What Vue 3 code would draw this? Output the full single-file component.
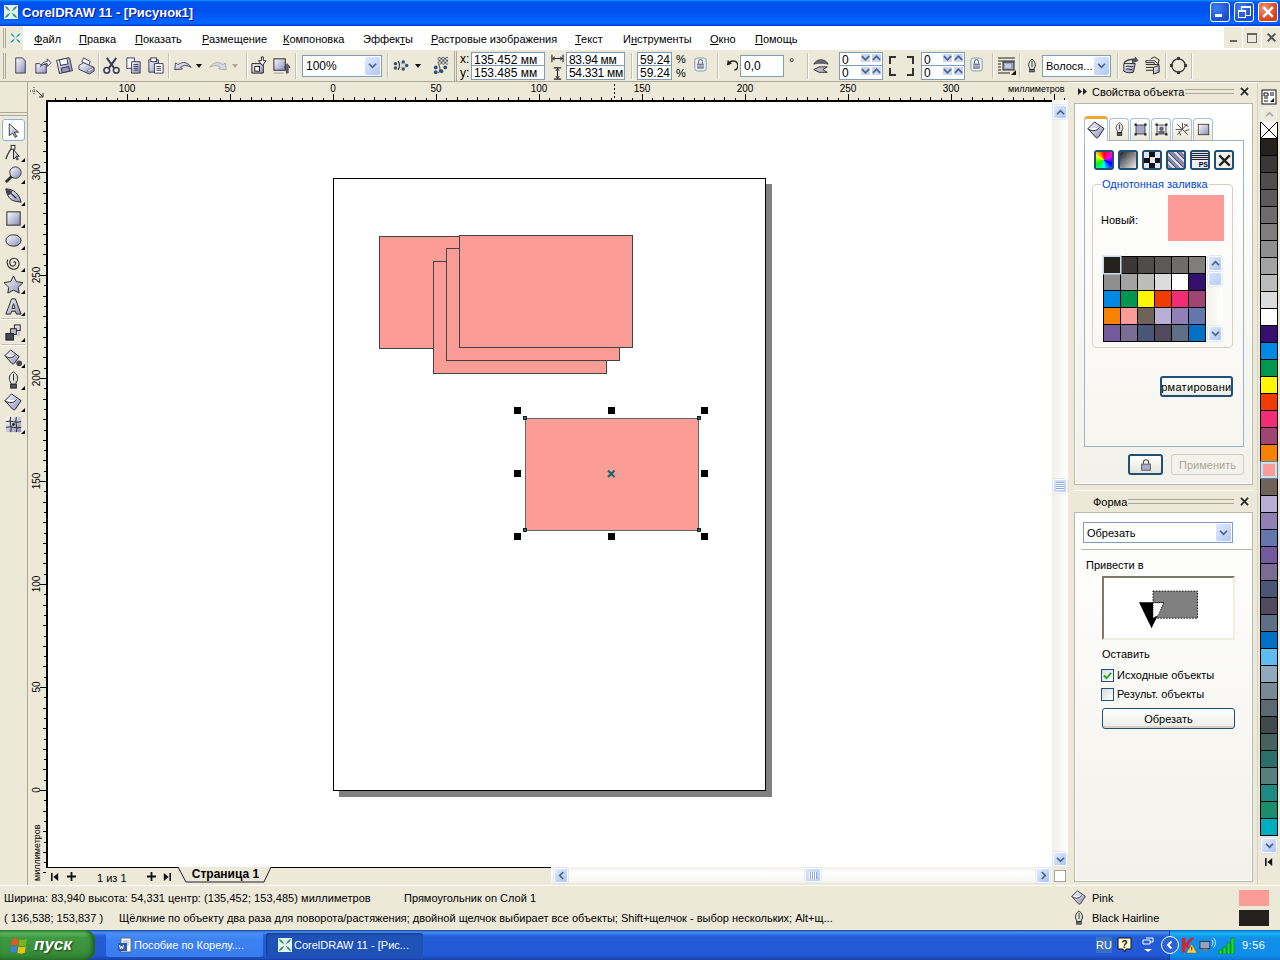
<script setup>
const menus = [
  ['', 'Ф', 'айл'], ['', 'П', 'равка'], ['', 'П', 'оказать'], ['', 'Р', 'азмещение'], ['', 'К', 'омпоновка'],
  ['Эффек', 'т', 'ы'], ['', 'Р', 'астровые изображения'], ['', 'Т', 'екст'], ['И', 'н', 'струменты'], ['', 'О', 'кно'], ['', 'П', 'омощь']
]
const colors = ['#24201c','#3a3735','#4f4c49','#5c5a58','#6e6d6b','#7f7e7d','#8f8f8f','#a3a3a3','#bcbcbb','#dcdcdc','#ffffff','#36106f','#0088e4','#009650','#fff700','#ef3c00','#f12d76','#a04571','#f58200','#fb9c96','#6f6259','#b9aed4','#9080b5','#6376ae','#735a9c','#7a6c93','#4a5676','#514a5f','#5f6f85','#0071c5','#5fbcf2','#90a9bc','#778a96','#5b6970','#42494c','#45625f','#2b6f6b','#55807d','#1e8a83','#1b8d6a','#00aec4']
const gridColors = colors.slice(0, 30)
const PX = 2.06
const hTicks = []
for (let v = -160; v <= 355; v += 5) {
  const x = Math.round(333 + v * PX) + 0.5
  hTicks.push({ x, len: v % 50 === 0 ? 6 : v % 10 === 0 ? 3 : 2 })
}
const hLabels = [-100, -50, 0, 50, 100, 150, 200, 250, 300].map(v => ({ x: 333 + v * PX, t: Math.abs(v) }))
const vTicks = []
for (let v = -40; v <= 325; v += 5) {
  const y = Math.round(790 - v * PX) + 0.5
  vTicks.push({ y, len: v % 50 === 0 ? 6 : v % 10 === 0 ? 3 : 2 })
}
const vLabels = [300, 250, 200, 150, 100, 50, 0].map(v => ({ y: 790 - v * PX, t: v }))
const rects = [
  { x: 379.5, y: 236.5 }, { x: 433.5, y: 261.5 }, { x: 446.5, y: 248.5 }, { x: 459.5, y: 235.5 }
]
const handles = [[514, 407], [608, 407], [701, 407], [514, 470], [701, 470], [514, 533], [608, 533], [701, 533]]
const nodes = [[523, 416], [697, 416], [523, 528], [697, 528]]
const tools1 = ['arrow', 'shape', 'zoom', 'free', 'rect', 'ell', 'spiral', 'star', 'text']
const tools2 = ['bucket', 'pen', 'fill', 'mesh']
const tabs = ['pen', 'xform', 'xform2', 'web', 'rect']
const fills = ['grad', 'pat', 'tex', 'ps']
</script>

<template>
  <div class="app">
    <svg class="sprite" width="0" height="0" aria-hidden="true">
      <defs>
        <linearGradient id="lg" x1="0" y1="0" x2="1" y2="1"><stop offset="0" stop-color="#ffffff"/><stop offset="1" stop-color="#8a8abb"/></linearGradient>
        <linearGradient id="lh" x1="0" y1="0" x2="1" y2="1"><stop offset="0" stop-color="#ffffff"/><stop offset="1" stop-color="#c9c9c0"/></linearGradient>
        <pattern id="chk" width="4" height="4" patternUnits="userSpaceOnUse"><rect width="4" height="4" fill="#dde"/><rect width="2" height="2" fill="#222"/><rect x="2" y="2" width="2" height="2" fill="#222"/></pattern>
      </defs>
      <symbol id="i-new" viewBox="0 0 20 20"><path d="M5 2h7l3 3v13l-2 0H5z" fill="url(#lg)" stroke="#3a3a5a"/></symbol>
      <symbol id="i-open" viewBox="0 0 20 20"><path d="M3 8h4l1 1h6v9H3z" fill="url(#lg)" stroke="#3a3a5a"/><path d="M8 11c1-4 4-5 7-5V3l4 4-4 4V8c-3 0-5 1-7 3z" fill="#fff" stroke="#3a3a5a"/></symbol>
      <symbol id="i-save" viewBox="0 0 20 20"><g transform="rotate(-12 10 10)"><path d="M3 3h13l1 1v13H3z" fill="url(#lg)" stroke="#3a3a5a"/><rect x="6" y="3" width="8" height="6" fill="#fff" stroke="#3a3a5a"/><rect x="6" y="12" width="8" height="5" fill="#99a" stroke="#3a3a5a"/></g></symbol>
      <symbol id="i-print" viewBox="0 0 20 20"><path d="M7 2l7 4-2 4-7-4z" fill="#fff" stroke="#3a3a5a"/><path d="M2 10l5-3 11 5v4l-5 3-11-5z" fill="url(#lg)" stroke="#3a3a5a"/><path d="M11 15l6-3v2l-6 3z" fill="#fff" stroke="#3a3a5a" stroke-width=".6"/></symbol>
      <symbol id="i-cut" viewBox="0 0 20 20"><g fill="none" stroke="#3a3a5a" stroke-width="1.6"><circle cx="5" cy="15" r="3"/><circle cx="15" cy="15" r="3"/><path d="M7 13L15 2M13 13L5 2" stroke-width="2"/></g></symbol>
      <symbol id="i-copy" viewBox="0 0 20 20"><path d="M3 2h8v11H3z" fill="#fff" stroke="#3a3a5a"/><path d="M8 6h9v12H8z" fill="url(#lg)" stroke="#3a3a5a"/><path d="M10 9h5M10 11h5M10 13h5M10 15h5" stroke="#3a3a5a"/></symbol>
      <symbol id="i-paste" viewBox="0 0 20 20"><path d="M3 4h10v13H3z" fill="url(#lg)" stroke="#3a3a5a"/><rect x="5" y="2" width="6" height="4" fill="#fff" stroke="#3a3a5a"/><path d="M9 8h9v10H9z" fill="#fff" stroke="#3a3a5a"/><path d="M11 11h5M11 13h5M11 15h5" stroke="#3a3a5a"/></symbol>
      <symbol id="i-undo" viewBox="0 0 22 20"><path d="M2 15l1-8 3 2c5-4 11-3 15 3-4-2-8-3-12 0l2 2z" fill="url(#lg)" stroke="#3a3a5a"/></symbol>
      <symbol id="i-redo" viewBox="0 0 22 20"><path d="M20 15l-1-8-3 2C11 5 5 6 1 12c4-2 8-3 12 0l-2 2z" fill="#d8d8de" stroke="#a5a5b0"/></symbol>
      <symbol id="i-import" viewBox="0 0 20 20"><path d="M2 8h12v10H2z" fill="url(#lg)" stroke="#222"/><rect x="5" y="11" width="5" height="5" fill="#fff" stroke="#222"/><path d="M14 1v4h3l-4 5-4-5h3V1z" fill="#fff" stroke="#222"/></symbol>
      <symbol id="i-export" viewBox="0 0 20 20"><rect x="2" y="3" width="12" height="12" fill="url(#lg)" stroke="#222"/><path d="M15 18v-6h-2l3-4 3 4h-2v6z" fill="#667" stroke="#222" stroke-width=".6"/><path d="M2 18h10" stroke="#99a"/></symbol>
      <symbol id="i-launch" viewBox="0 0 22 20"><g fill="#2f4f7a"><circle cx="4" cy="8" r="2"/><circle cx="4" cy="13" r="2"/><circle cx="13" cy="6" r="2"/><circle cx="17" cy="10" r="2"/><circle cx="13" cy="14" r="2"/></g><path d="M7 5c2 3 2 7 0 10" fill="none" stroke="#333" stroke-width="1.4"/><path d="M10 8h6M10 12h6" stroke="#8aa"/></symbol>
      <symbol id="i-online" viewBox="0 0 20 20"><g fill="#2f4f7a"><circle cx="5" cy="12" r="2"/><circle cx="5" cy="17" r="2"/><circle cx="15" cy="12" r="2"/><circle cx="11" cy="16" r="2"/></g><rect x="7" y="1" width="11" height="8" fill="url(#chk)" opacity=".75"/><path d="M8 9c2 3 2 6 0 9" fill="none" stroke="#333"/></symbol>
      <symbol id="i-wh" viewBox="0 0 14 14"><path d="M1 7h12M1 3v8M13 3v8" stroke="#222" fill="none" stroke-width="1.2"/><path d="M1 7l3-2.5v5zM13 7l-3-2.5v5z" fill="#445"/></symbol>
      <symbol id="i-ht" viewBox="0 0 14 14"><path d="M7 1v12M3 1h8M3 13h8" stroke="#222" fill="none" stroke-width="1.2"/><path d="M7 1L4.500 4h5zM7 13l-2.500-3h5z" fill="#445"/></symbol>
      <symbol id="i-lock" viewBox="0 0 16 18"><rect x="1" y="1" width="14" height="16" rx="3" fill="#e8eef4" stroke="#6f93ad"/><path d="M5.500 8V5.500a2.500 2.500 0 0 1 5 0V8" fill="none" stroke="#444"/><rect x="4" y="8" width="8" height="6" fill="#667"/><path d="M4 10h8M4 12h8" stroke="#dde"/></symbol>
      <symbol id="i-rot" viewBox="0 0 14 14"><path d="M10 12a5 5 0 1 0-6-6" fill="none" stroke="#222" stroke-width="1.500"/><path d="M1 6h6L4 1z" fill="#222" transform="rotate(-20 4 4)"/></symbol>
      <symbol id="i-mir" viewBox="0 0 20 20"><path d="M2 8c2-4 5-5 8-5s6 1 8 5c-3-1-5-1-8-1s-5 0-8 1z" fill="#667" stroke="#222" stroke-width=".7"/><path d="M17 11H8l-6 3 6 3h9l-5-3z" fill="#bbc" stroke="#222"/></symbol>
      <symbol id="i-order" viewBox="0 0 20 20"><path d="M1 2h17M1 5h17M1 8h3M1 11h3M1 14h3M1 17h12" stroke="#222"/><rect x="6" y="6" width="11" height="8" fill="#99a3bd" stroke="#222"/><rect x="8" y="8" width="6" height="4" fill="#c4cbe0"/><path d="M19 14v5h-5z" fill="#111"/></symbol>
      <symbol id="i-penc" viewBox="0 0 14 18"><path d="M7 1c3 2 4 5 4 8l-2 4H5l-2-4c0-3 1-6 4-8z" fill="url(#lh)" stroke="#222"/><path d="M7 3v7" stroke="#222"/><rect x="4" y="13" width="6" height="3" fill="#667" stroke="#222" stroke-width=".6"/></symbol>
      <symbol id="i-tocurve" viewBox="0 0 20 20"><path d="M4 7c2-2 5-3 8-3v3l6-2-3-4v2C10 3 5 4 3 7z" fill="#556" stroke="#222" stroke-width=".6"/><path d="M3 8h12l-2 9c-3 1-7 1-10-1z" fill="url(#lg)" stroke="#222"/><path d="M5 11c3-1 5 1 8 0M5 14c3-1 5 1 7 0" fill="none" stroke="#222"/></symbol>
      <symbol id="i-tocurve2" viewBox="0 0 20 20"><path d="M3 5h9l5 4-5 0v-2H3zM3 9h9M3 12h8M3 15h8" fill="#fff" stroke="#222"/><path d="M8 3l4-2 5 3-1 4" fill="none" stroke="#222"/><path d="M11 12l6-2v7l-6 2z" fill="url(#lg)" stroke="#222"/></symbol>
      <symbol id="i-oval" viewBox="0 0 20 20"><circle cx="10" cy="10" r="7" fill="none" stroke="#333" stroke-width="1.300"/><g fill="#333"><rect x="8.500" y="1" width="3" height="3"/><rect x="8.500" y="16" width="3" height="3"/><rect x="1" y="8.500" width="3" height="3"/><rect x="16" y="8.500" width="3" height="3"/></g></symbol>
      <symbol id="t-arrow" viewBox="0 0 20 20"><path d="M5 2v14l4-3 3 5 2-1-3-5h5z" fill="url(#lg)" stroke="#222"/></symbol>
      <symbol id="t-shape" viewBox="0 0 20 20"><path d="M2 17c2-6 4-10 7-12" fill="none" stroke="#333" stroke-width="1.300"/><rect x="7.500" y="2.500" width="4" height="4" fill="#fff" stroke="#222"/><path d="M10 7v10l2-2 2 3 1-1-2-3h3z" fill="url(#lg)" stroke="#222"/></symbol>
      <symbol id="t-zoom" viewBox="0 0 20 20"><circle cx="12" cy="8" r="6" fill="url(#lg)" stroke="#333"/><path d="M8 12l-6 6" stroke="#333" stroke-width="3"/></symbol>
      <symbol id="t-free" viewBox="0 0 20 20"><path d="M2 2c8 0 14 5 16 14l-6-1C6 14 3 9 2 2z" fill="url(#lg)" stroke="#222"/><path d="M2 2l11 10" stroke="#222" stroke-width="1.300"/><path d="M2 2c3 0 5 1 7 3L5 9C3 7 2 5 2 2z" fill="#445"/></symbol>
      <symbol id="t-rect" viewBox="0 0 20 20"><rect x="3" y="3" width="14" height="14" fill="url(#lg)" stroke="#222"/></symbol>
      <symbol id="t-ell" viewBox="0 0 20 20"><ellipse cx="10" cy="10" rx="8" ry="6" fill="url(#lg)" stroke="#222"/></symbol>
      <symbol id="t-spiral" viewBox="0 0 20 20"><path d="M10 10c1-2 3 0 2 2-1 3-6 2-6-2 0-4 5-6 8-3 4 4 1 11-5 10-5-1-7-7-5-10" fill="none" stroke="#333" stroke-width="1.200"/></symbol>
      <symbol id="t-star" viewBox="0 0 20 20"><path d="M10 1l3 6 7 1-5 5 1 6-6-3-6 3 1-6-5-5 7-1z" fill="url(#lg)" stroke="#222"/></symbol>
      <symbol id="t-text" viewBox="0 0 20 20"><path d="M8 2h4l6 16h-5l-1-3H8l-1 3H2z" fill="url(#lg)" stroke="#222"/><path d="M10 7l-1.500 5h3z" fill="#fff" stroke="#222"/></symbol>
      <symbol id="t-blend" viewBox="0 0 20 20"><path d="M17 4v10h-5v4" fill="#c6c6de"/><rect x="11" y="2" width="6" height="6" fill="#dde" stroke="#222"/><rect x="7" y="6" width="6" height="6" fill="#bbc" stroke="#222"/><rect x="2" y="11" width="8" height="7" fill="#445" stroke="#222"/></symbol>
      <symbol id="t-bucket" viewBox="0 0 20 20"><path d="M1 7l6-6 9 7-5 7c-1 1-2 1-3 0z" fill="url(#lg)" stroke="#222"/><path d="M1 7c4 3 8 3 11-1" fill="#fff" stroke="#222"/><circle cx="16" cy="15" r="3" fill="#445"/></symbol>
      <symbol id="t-pen" viewBox="0 0 20 20"><path d="M10 1c4 2 5 6 4 9l-2 4H8l-2-4c-1-3 0-7 4-9z" fill="url(#lh)" stroke="#222"/><path d="M10 3v7" stroke="#222"/><rect x="7" y="14" width="6" height="4" fill="#556" stroke="#222"/></symbol>
      <symbol id="t-fill" viewBox="0 0 20 20"><path d="M1 8l7-7 10 7-6 9c-1 1-2 1-3 0z" fill="url(#lg)" stroke="#222"/><path d="M1 8c4 3 9 3 12-1" fill="#fff" stroke="#222"/></symbol>
      <symbol id="t-mesh" viewBox="0 0 20 20"><rect x="2" y="2" width="16" height="16" fill="url(#lg)"/><path d="M2 7c5-2 11 2 16 0M2 13c5-2 11 2 16 0M7 2c-2 6 2 11 0 16M13 2c-2 6 2 11 0 16" fill="none" stroke="#222"/><circle cx="10" cy="10" r="1.500" fill="#222"/></symbol>
      <symbol id="t-xform" viewBox="0 0 20 20"><rect x="4" y="4" width="12" height="12" fill="#a7a7cc" stroke="#222"/><g fill="#222"><rect x="2" y="2" width="3" height="3"/><rect x="15" y="2" width="3" height="3"/><rect x="2" y="15" width="3" height="3"/><rect x="15" y="15" width="3" height="3"/></g></symbol>
      <symbol id="t-xform2" viewBox="0 0 20 20"><rect x="4" y="4" width="12" height="12" fill="#e8e8f2" stroke="#222"/><g fill="#222"><rect x="2" y="2" width="3" height="3"/><rect x="15" y="2" width="3" height="3"/><rect x="2" y="15" width="3" height="3"/><rect x="15" y="15" width="3" height="3"/></g><circle cx="10" cy="9" r="3" fill="#667"/><rect x="6" y="12" width="8" height="4" fill="#667"/></symbol>
      <symbol id="t-web" viewBox="0 0 20 20"><path d="M3 3l14 14M17 2L3 17M10 1v8M1 10h8M5 12l3 6M12 3l6 3M13 12l6-2" stroke="#333" fill="none" stroke-width="1.100"/></symbol>
      <symbol id="i-chev" viewBox="0 0 10 8"><path d="M1 6l4-4 4 4" fill="none" stroke="#4d6185" stroke-width="2"/></symbol>
      <symbol id="i-x" viewBox="0 0 10 10"><path d="M1 1l8 8M9 1L1 9" stroke="#222" stroke-width="1.800"/></symbol>
      <symbol id="i-dbl" viewBox="0 0 9 7"><path d="M0 0l4 3.500L0 7zM5 0l4 3.500L5 7z" fill="#222"/></symbol>
      <symbol id="i-first" viewBox="0 0 10 12"><path d="M1 1v10" stroke="#111" stroke-width="2"/><path d="M9 1v10L3 6z" fill="#111"/></symbol>
      <symbol id="i-plus" viewBox="0 0 10 10"><path d="M5 0v10M0 5h10" stroke="#111" stroke-width="2"/></symbol>
      <symbol id="i-flag" viewBox="0 0 20 20"><path d="M3 4c2-1 4-1 6 0l-1 6c-2-1-4-1-6 0z" fill="#e8542a"/><path d="M10 4c2 1 4 1 7 0l-1 6c-2 1-5 1-7 0z" fill="#7ab51d"/><path d="M2 11c2-1 4-1 6 0l-1 6c-2-1-4-1-6 0z" fill="#3a84d6"/><path d="M9 11c2 1 5 1 7 0l-1 6c-2 1-5 1-7 0z" fill="#f4c20d"/></symbol>
      <symbol id="i-corel" viewBox="0 0 16 16"><rect x="1" y="1" width="14" height="14" fill="#e8f0ec"/><path d="M2 2c4 1 4 4 6 6 2-2 2-5 6-6-1 4-4 4-6 6 2 2 5 2 6 6-4-1-4-4-6-6-2 2-2 5-6 6 1-4 4-4 6-6-2-2-5-2-6-6z" fill="#1c9b70"/></symbol>
      <symbol id="i-word" viewBox="0 0 16 16"><path d="M4 1h10v14H4z" fill="#fff" stroke="#58688a"/><path d="M6 4h6M6 6h6M6 8h6" stroke="#8ea0c0"/><rect x="1" y="6" width="9" height="8" fill="#2b5bb5"/><path d="M2.500 8l1 4 1-3 1 3 1-4" fill="none" stroke="#fff"/></symbol>
    </svg>

    <header class="title">
      <svg class="title-ic"><use href="#i-corel"/></svg>
      <span class="title-text">CorelDRAW 11 - [Рисунок1]</span>
      <div class="winbtns">
        <button class="wb"><span class="min"></span></button>
        <button class="wb"><span class="res"></span></button>
        <button class="wb close"><svg viewBox="0 0 10 10"><path d="M1 1l8 8M9 1L1 9" stroke="#fff" stroke-width="2"/></svg></button>
      </div>
    </header>

    <nav class="menu">
      <div class="menu-left"><i class="grip"></i><svg class="menu-ic"><use href="#i-corel"/></svg></div>
      <div class="menu-items">
        <span v-for="m in menus" :key="m[1] + m[2]">{{ m[0] }}<u>{{ m[1] }}</u>{{ m[2] }}</span>
      </div>
      <div class="mdi">
        <span class="mb"><i class="m-min"></i></span>
        <span class="mb"><i class="m-res"></i></span>
        <span class="mb"><svg viewBox="0 0 10 10"><path d="M1.500 1.500l7 7M8.500 1.500l-7 7" stroke="#555" stroke-width="1.800"/></svg></span>
      </div>
    </nav>

    <div class="toolbar">
      <i class="grip grip-tb"></i>
      <span class="b"><svg><use href="#i-new"/></svg></span>
      <span class="b"><svg><use href="#i-open"/></svg></span>
      <span class="b"><svg><use href="#i-save"/></svg></span>
      <span class="b"><svg><use href="#i-print"/></svg></span>
      <i class="sep sa"></i>
      <span class="b"><svg><use href="#i-cut"/></svg></span>
      <span class="b"><svg><use href="#i-copy"/></svg></span>
      <span class="b"><svg><use href="#i-paste"/></svg></span>
      <i class="sep sb"></i>
      <span class="b"><svg><use href="#i-undo"/></svg></span>
      <span class="drop"></span>
      <span class="b"><svg><use href="#i-redo"/></svg></span>
      <span class="drop off"></span>
      <i class="sep sc"></i>
      <span class="b"><svg><use href="#i-import"/></svg></span>
      <span class="b"><svg><use href="#i-export"/></svg></span>
      <i class="sep sd"></i>
      <div class="combo zoomc"><span>100%</span><span class="combo-btn"><svg><use href="#i-chev"/></svg></span></div>
      <i class="sep se"></i>
      <span class="b"><svg><use href="#i-launch"/></svg></span>
      <span class="drop"></span>
      <span class="b bl3"><svg><use href="#i-online"/></svg></span>
      <i class="grip grip-mid"></i>
      <div class="xy"><span>x:</span><span>y:</span></div>
      <div class="pair w74"><span>135.452 мм</span><span>153.485 мм</span></div>
      <div class="wh"><svg><use href="#i-wh"/></svg><svg><use href="#i-ht"/></svg></div>
      <div class="pair w59"><span>83.94 мм</span><span>54.331 мм</span></div>
      <i class="sep sf"></i>
      <div class="pair w35"><span>59.24</span><span>59.24</span></div>
      <div class="pct"><span>%</span><span>%</span></div>
      <span class="lockb"><svg><use href="#i-lock"/></svg></span>
      <i class="sep sg"></i>
      <span class="rot"><svg><use href="#i-rot"/></svg></span>
      <div class="angle">0,0</div>
      <span class="deg">°</span>
      <i class="sep sh"></i>
      <span class="mir"><svg><use href="#i-mir"/></svg></span>
      <div class="pair w44 spin ml6">
        <span>0<b class="sp"><svg><use href="#i-chev" class="flip"/></svg><svg><use href="#i-chev"/></svg></b></span>
        <span>0<b class="sp"><svg><use href="#i-chev" class="flip"/></svg><svg><use href="#i-chev"/></svg></b></span>
      </div>
      <div class="corners"><i class="c1"></i><i class="c2"></i><i class="c3"></i><i class="c4"></i></div>
      <div class="pair w44 spin">
        <span>0<b class="sp"><svg><use href="#i-chev" class="flip"/></svg><svg><use href="#i-chev"/></svg></b></span>
        <span>0<b class="sp"><svg><use href="#i-chev" class="flip"/></svg><svg><use href="#i-chev"/></svg></b></span>
      </div>
      <span class="lockb w22"><svg><use href="#i-lock"/></svg></span>
      <i class="sep si"></i>
      <span class="b w25"><svg><use href="#i-order"/></svg></span>
      <i class="sep sj"></i>
      <span class="pen"><svg><use href="#i-penc"/></svg></span>
      <div class="combo penc"><span>Волося...</span><span class="combo-btn"><svg><use href="#i-chev"/></svg></span></div>
      <i class="sep sk"></i>
      <span class="b"><svg><use href="#i-tocurve"/></svg></span>
      <span class="b"><svg><use href="#i-tocurve2"/></svg></span>
      <i class="sep sl"></i>
      <span class="b"><svg><use href="#i-oval"/></svg></span>
      <i class="sep sl"></i>
    </div>

    <main class="body">
      <aside class="tools">
        <div class="tools-grip"></div>
        <span v-for="(t, i) in tools1" :key="t" class="tool" :class="{ active: i === 0, noflag: i === 0 }"><svg><use :href="'#t-' + t"/></svg></span>
        <i class="hsep"></i>
        <span class="tool"><svg><use href="#t-blend"/></svg></span>
        <i class="hsep"></i>
        <span v-for="t in tools2" :key="t" class="tool"><svg><use :href="'#t-' + t"/></svg></span>
      </aside>

      <section class="work">
        <div class="corner">
          <svg viewBox="0 0 18 18"><path d="M6 5v8M2 9h8" stroke="#333" stroke-dasharray="1 1"/><path d="M9 9l6 6M15 11v4h-4" stroke="#333" fill="none"/></svg>
        </div>
        <svg class="hruler" viewBox="46 82 1022 18">
          <path v-for="t in hTicks" :key="t.x" :d="`M${t.x} 100v-${t.len}`" stroke="#000"/>
          <text v-for="l in hLabels" :key="l.x" :x="l.x" y="92" class="rt" text-anchor="middle">{{ l.t }}</text>
          <path d="M614.500 84v16" stroke="#000" stroke-dasharray="2 2"/>
          <rect x="1006" y="82" width="62" height="11" fill="#ece9d8"/>
          <text x="1008" y="92" class="rt ru">миллиметров</text>
        </svg>
        <svg class="vruler" viewBox="28 100 18 785">
          <path v-for="t in vTicks" :key="t.y" :d="`M46 ${t.y}h-${t.len}`" stroke="#000"/>
          <text v-for="l in vLabels" :key="l.y" :transform="`translate(40 ${l.y}) rotate(-90)`" class="rt" text-anchor="middle">{{ l.t }}</text>
          <rect x="30" y="824" width="12" height="61" fill="#ece9d8"/>
          <text transform="translate(40 881) rotate(-90)" class="rt ru">миллиметров</text>
        </svg>
        <svg class="canvas" viewBox="46 100 1006 767">
          <rect x="46" y="100" width="1006" height="767" fill="#fff"/>
          <path d="M47 867V101h1005" fill="none" stroke="#000" stroke-width="2"/>
          <rect x="339" y="184" width="433" height="613" fill="#808080"/>
          <rect x="333.500" y="178.500" width="432" height="612" fill="#fff" stroke="#000"/>
          <rect v-for="r in rects" :key="r.x" :x="r.x" :y="r.y" width="173" height="112" fill="#fb9c96" stroke="#444"/>
          <rect x="525.500" y="418.500" width="173" height="112" fill="#fb9c96" stroke="#666"/>
          <rect v-for="n in nodes" :key="n[0] + '-' + n[1]" :x="n[0] + .5" :y="n[1] + .5" width="3" height="3" fill="#1e6a6a" stroke="#000" stroke-width=".8"/>
          <rect v-for="h in handles" :key="h[0] + '/' + h[1]" :x="h[0]" :y="h[1]" width="7" height="7" fill="#000"/>
          <path d="M608 470.500l6.500 6.500M614.500 470.500l-6.500 6.500" stroke="#0d6a6c" stroke-width="2"/>
        </svg>
        <div class="vscroll">
          <span class="sbtn"><svg><use href="#i-chev"/></svg></span>
          <span class="thumb vthumb"><i></i></span>
          <span class="sbtn"><svg><use href="#i-chev" class="flip"/></svg></span>
        </div>
        <div class="bottom">
          <div class="pagenav">
            <svg class="pn pn1"><use href="#i-first"/></svg>
            <svg class="pn pn2"><use href="#i-plus"/></svg>
            <span class="pgnum">1 из 1</span>
            <svg class="pn pn3"><use href="#i-plus"/></svg>
            <svg class="pn pn4"><use href="#i-first"/></svg>
            <span class="pgtab">
              <svg class="tabshape" viewBox="0 0 96 18"><path d="M0 0l8 15h78L93 0" fill="#ece9d8" stroke="#222"/></svg>
              <b>Страница 1</b>
            </span>
          </div>
          <div class="hscroll">
            <span class="sbtn lft"><svg><use href="#i-chev"/></svg></span>
            <span class="thumb hthumb"><i></i></span>
            <span class="sbtn rgt"><svg><use href="#i-chev"/></svg></span>
          </div>
        </div>
        <div class="sq"><i></i></div>
      </section>

      <aside class="dock">
        <div class="dtitle t1">
          <svg class="dbl"><use href="#i-dbl"/></svg><span>Свойства объекта</span><i class="rule"></i><svg class="dx"><use href="#i-x"/></svg>
        </div>
        <div class="panel p1">
          <div class="tabs">
            <span class="tab on"><svg><use href="#t-fill"/></svg></span>
            <span v-for="t in tabs" :key="t" class="tab"><svg><use :href="'#t-' + t"/></svg></span>
          </div>
          <div class="tabbody">
            <div class="fillrow">
              <span class="fb"><i class="wheel"></i></span>
              <span v-for="f in fills" :key="f" class="fb"><i :class="'f-' + f">{{ f === 'ps' ? 'PS' : '' }}</i></span>
              <span class="fb"><svg><use href="#i-x"/></svg></span>
            </div>
            <fieldset class="group">
              <legend>Однотонная заливка</legend>
              <div class="newrow"><span class="newlbl">Новый:</span><i class="newcol"></i></div>
              <div class="gridwrap">
                <div class="cgrid">
                  <i v-for="(c, i) in gridColors" :key="c" :class="{ sel: i === 0 }" :style="{ background: c }"></i>
                </div>
                <div class="gscroll">
                  <span class="sbtn"><svg><use href="#i-chev"/></svg></span>
                  <span class="thumb gthumb"></span>
                  <span class="sbtn"><svg><use href="#i-chev" class="flip"/></svg></span>
                </div>
              </div>
            </fieldset>
            <div class="fmt"><span>Форматирование</span></div>
          </div>
          <div class="pbtns">
            <span class="lk"><svg viewBox="0 0 16 16"><path d="M5 7V5a3 3 0 0 1 6 0v2" fill="none" stroke="#555" stroke-width="1.300"/><rect x="3" y="7" width="10" height="7" fill="#aaaacc" stroke="#555"/></svg></span>
            <span class="apply">Применить</span>
          </div>
        </div>
        <div class="dtitle t2">
          <span>Форма</span><i class="rule"></i><svg class="dx"><use href="#i-x"/></svg>
        </div>
        <div class="panel p2">
          <div class="combo shapec"><span>Обрезать</span><span class="combo-btn"><svg><use href="#i-chev"/></svg></span></div>
          <div class="divider"></div>
          <div class="lbl1">Привести в</div>
          <div class="preview">
            <svg viewBox="0 0 131 62">
              <rect x="49.500" y="13.500" width="46" height="28" fill="#808080" stroke="#000" stroke-dasharray="1.500 1.500"/>
              <path d="M35 25h26l-13 27z" fill="#000"/>
              <path d="M49.500 25.500h11l-5.500 13-5.500 3z" fill="#fff" stroke="#000" stroke-dasharray="1 1" stroke-width=".8"/>
            </svg>
          </div>
          <div class="lbl2">Оставить</div>
          <label class="chk"><i class="cb on"><svg viewBox="0 0 12 12"><path d="M2 6l3 3 5-6" fill="none" stroke="#21a121" stroke-width="2"/></svg></i>Исходные объекты</label>
          <label class="chk"><i class="cb"></i>Результ. объекты</label>
          <div class="actbtn">Обрезать</div>
        </div>
      </aside>

      <aside class="palette">
        <span class="pal-top"><svg viewBox="0 0 16 16"><rect x="1" y="1" width="14" height="14" fill="#fff" stroke="#111"/><path d="M3 4h4v3H3zM9 4h4M9 6h4M3 9h4M3 12h4" fill="none" stroke="#111"/><path d="M13 9v4H9z" fill="#111"/></svg></span>
        <span class="sbtn pal-up"><svg><use href="#i-chev"/></svg></span>
        <div class="swatches">
          <i class="none"><svg viewBox="0 0 17 16" preserveAspectRatio="none"><path d="M0 0l17 16M17 0L0 16" stroke="#000"/></svg></i>
          <i v-for="(c, i) in colors" :key="c" :class="{ cur: i === 19 }" :style="{ background: c }"></i>
        </div>
        <span class="sbtn pal-down"><svg><use href="#i-chev" class="flip"/></svg></span>
        <svg class="pal-nav"><use href="#i-first"/></svg>
      </aside>
    </main>

    <footer class="status">
      <div class="st-main">
        <div class="st1"><span class="w400">Ширина: 83,940  высота: 54,331  центр: (135,452; 153,485)  миллиметров</span><span>Прямоугольник on Слой 1</span></div>
        <div class="st2"><span class="w115">( 136,538; 153,837 )</span><span>Щёлкние по объекту два раза для поворота/растяжения; двойной щелчок выбирает все объекты; Shift+щелчок - выбор нескольких; Alt+щ...</span></div>
      </div>
      <div class="st-right">
        <div class="st-row"><svg><use href="#t-fill"/></svg><span>Pink</span><i class="st-sw pink"></i></div>
        <div class="st-row"><svg><use href="#i-penc"/></svg><span>Black  Hairline</span><i class="st-sw blk"></i></div>
      </div>
    </footer>

    <div class="taskbar">
      <div class="start"><svg><use href="#i-flag"/></svg><span>пуск</span></div>
      <div class="task"><svg><use href="#i-word"/></svg><span>Пособие по Корелу....</span></div>
      <div class="task cur"><svg><use href="#i-corel"/></svg><span>CorelDRAW 11 - [Рис...</span></div>
      <div class="lang">RU</div>
      <svg class="help" viewBox="0 0 18 18"><path d="M2 2h13v11h-5l-1 3-2-3H2z" fill="#fffbd0" stroke="#111"/><text x="8.500" y="11.500" text-anchor="middle" class="qm">?</text></svg>
      <svg class="dsk" viewBox="0 0 16 20"><path d="M3 5h7v4H3zM6 3h7v4h-3" fill="none" stroke="#fff"/><path d="M4 14h8l-4 3z" fill="#fff"/></svg>
      <div class="tray">
        <span class="chev"><svg viewBox="0 0 10 10"><path d="M6.500 1.500L3 5l3.500 3.500" fill="none" stroke="#fff" stroke-width="2"/></svg></span>
        <svg class="ti" viewBox="0 0 18 20"><path d="M1 2h4v7l6-7h4l-7 8 7 8h-4l-6-7v7H1z" fill="#d8232a"/><path d="M12 9l6 10H6z" fill="#f5d33b" stroke="#655" stroke-width=".6"/><path d="M12 12v4" stroke="#222"/></svg>
        <svg class="ti" viewBox="0 0 20 20"><rect x="1" y="6" width="11" height="8" fill="#8fa4c2" stroke="#334"/><rect x="4" y="14" width="6" height="3" fill="#778"/><path d="M14 4c2 2 2 5 0 7M16 2c3 3 3 8 0 11" fill="none" stroke="#dfe8ff"/></svg>
        <svg class="ti" viewBox="0 0 18 18"><g fill="#17e30c" stroke="#063" stroke-width=".5"><rect x="1" y="14" width="3" height="4"/><rect x="5" y="11" width="3" height="7"/><rect x="9" y="7" width="3" height="11"/><rect x="13" y="2" width="3" height="16"/></g></svg>
        <span class="clock">9:56</span>
      </div>
    </div>
  </div>
</template>

<style scoped>
.app { width: 1280px; height: 960px; display: flex; flex-direction: column; overflow: hidden; background: #ece9d8; font: 11px "Liberation Sans", Arial, sans-serif; color: #000; position: relative; }
.sprite { position: absolute; }
i { display: block; font-style: normal; }
svg { display: block; }

.title { height: 26px; flex: none; display: flex; align-items: center; background: linear-gradient(180deg, #0997ff 0%, #0053ee 8%, #0050ee 40%, #0066ff 88%, #005bff 93%, #003dd7 96%, #003dd7 100%); }
.title-ic { width: 16px; height: 16px; margin: 0 3px 2px 3px; }
.title-text { color: #fff; font-weight: 700; font-size: 13px; text-shadow: 1px 1px #0f1089; margin-bottom: 1px; }
.winbtns { margin-left: auto; display: flex; gap: 4px; padding-right: 2px; }
.wb { width: 20px; height: 20px; padding: 0; border: 1px solid #fff; border-radius: 3px; background: radial-gradient(circle at 30% 30%, #3f7ff0, #1c4fd8 70%); position: relative; margin-bottom: 2px; }
.wb.close { background: radial-gradient(circle at 30% 30%, #f0926e, #d8401c 70%); }
.wb.close svg { width: 12px; height: 12px; margin: 3px; }
.min { position: absolute; left: 4px; bottom: 4px; width: 7px; height: 3px; background: #fff; }
.res { position: absolute; left: 6px; top: 3px; width: 8px; height: 7px; border: 1px solid #fff; border-top-width: 2px; }
.res::after { content: ""; position: absolute; left: -4px; top: 2px; width: 6px; height: 5px; border: 1px solid #fff; border-top-width: 2px; background: #2b60de; }

.menu { height: 24px; flex: none; display: flex; background: #fff; }
.menu-left { width: 23px; background: #ece9d8; display: flex; align-items: center; }
.grip { width: 3px; height: 20px; margin: 0 0 0 3px; box-sizing: border-box; border-left: 1px solid #aca899; border-right: 1px solid #aca899; }
.menu-ic { width: 13px; height: 16px; margin-left: 3px; }
.menu-items { display: grid; grid-template-columns: 45px 56px 67px 81px 80px 68px 144px 48px 87px 45px 60px; margin-left: 11px; align-items: center; height: 100%; padding-top: 1px; box-sizing: border-box; white-space: nowrap; }
.mdi { margin-left: auto; display: flex; gap: 1px; padding: 1px 0 2px; }
.mb { width: 18px; height: 21px; background: #ece9d8; display: flex; align-items: center; justify-content: center; position: relative; }
.mb svg { width: 11px; height: 11px; }
.m-min { width: 7px; height: 2px; background: #666; margin-top: 7px; }
.m-res { width: 8px; height: 7px; border: 1px solid #666; border-top-width: 2px; }

.toolbar { height: 32px; flex: none; display: flex; align-items: center; background: #ece9d8; border-bottom: 1px solid #aca899; box-sizing: border-box; }
.grip-tb { margin: 0 3px 0 3px; height: 26px; }
.grip-mid { margin: 0 3px 0 3px; width: 3px; height: 30px; }
.b { width: 22px; height: 22px; flex: none; display: flex; align-items: center; justify-content: center; }
.b svg { width: 19px; height: 19px; }
.w25 { width: 25px; }
.w25 svg { width: 20px; height: 20px; }
.drop { width: 14px; height: 22px; flex: none; position: relative; }
.drop::after { content: ""; position: absolute; left: 3px; top: 9px; border: 3px solid transparent; border-top: 4px solid #111; }
.drop.off::after { border-top-color: #aca899; }
.bl3 { margin-left: 3px; }
.sep { width: 2px; height: 26px; flex: none; border-left: 1px solid #c5c2b3; background: #fff; box-sizing: border-box; }
.sa { margin: 0 0 0 1px; } .sb { margin: 0 1px 0 2px; } .sc { margin: 0 0 0 3px; } .sd { margin: 0 5px 0 3px; } .se { margin: 0 1px 0 5px; }
.sf { margin: 0 4px 0 6px; } .sg { margin: 0 0 0 7px; } .sh { margin: 0 0 0 8px; } .si { margin: 0 0 0 5px; } .sj { margin: 0; } .sk { margin: 0 0 0 6px; } .sl { margin: 0 0 0 2px; }
.ml6 { margin-left: 6px; }
.combo { height: 22px; box-sizing: border-box; flex: none; display: flex; align-items: center; justify-content: space-between; background: #fff; border: 1px solid #7f9db9; font-size: 12px; padding-left: 3px; }
.zoomc { width: 80px; }
.penc { width: 69px; font-size: 11px; }
.combo-btn { width: 15px; height: 18px; margin-right: 1px; background: linear-gradient(135deg, #e1ebff, #b1c7f5); border-radius: 2px; display: flex; align-items: center; justify-content: center; }
.combo-btn svg { width: 9px; height: 7px; transform: rotate(180deg); }
.xy { width: 11px; flex: none; display: flex; flex-direction: column; font-size: 12px; line-height: 14px; height: 28px; }
.pair { display: flex; flex: none; flex-direction: column; height: 28px; box-sizing: border-box; border: 1px solid #7f9db9; background: #fff; font-size: 12px; }
.pair span { height: 13px; line-height: 15px; padding-left: 2px; overflow: hidden; position: relative; white-space: nowrap; }
.pair span:first-child { border-bottom: 1px solid #7f9db9; }
.w74 { width: 74px; } .w59 { width: 59px; letter-spacing: -.3px; } .w35 { width: 35px; } .w44 { width: 44px; }
.wh { width: 21px; flex: none; display: flex; flex-direction: column; align-items: center; gap: 2px; padding-left: 3px; box-sizing: border-box; }
.wh svg { width: 13px; height: 13px; }
.pct { width: 18px; flex: none; display: flex; flex-direction: column; align-items: center; line-height: 14px; font-size: 11px; height: 28px; }
.lockb { width: 20px; flex: none; display: flex; justify-content: center; }
.lockb.w22 { width: 22px; }
.lockb svg { width: 13px; height: 15px; margin-bottom: 3px; }
.rot { width: 21px; flex: none; display: flex; justify-content: center; padding-left: 3px; box-sizing: border-box; }
.rot svg { width: 13px; height: 13px; }
.angle { width: 44px; height: 22px; flex: none; box-sizing: border-box; border: 1px solid #7f9db9; background: #fff; padding-left: 3px; line-height: 20px; font-size: 12px; }
.deg { width: 15px; flex: none; text-align: center; font-size: 13px; margin-bottom: 6px; }
.mir { width: 24px; flex: none; display: flex; justify-content: center; }
.mir svg { width: 18px; height: 18px; }
.spin .sp { position: absolute; right: 1px; top: 1px; display: flex; gap: 2px; }
.spin .sp svg { width: 9px; height: 8px; background: #c8d7f6; }
.corners { width: 38px; height: 26px; flex: none; position: relative; }
.corners i { position: absolute; width: 5px; height: 6px; border: 0 solid #333; }
.c1 { left: 6px; top: 3px; border-top-width: 2px !important; border-left-width: 2px !important; }
.c2 { left: 24px; top: 3px; border-top-width: 2px !important; border-right-width: 2px !important; }
.c3 { left: 6px; bottom: 3px; border-bottom-width: 2px !important; border-left-width: 2px !important; }
.c4 { left: 24px; bottom: 3px; border-bottom-width: 2px !important; border-right-width: 2px !important; }
.pen { width: 21px; flex: none; display: flex; justify-content: center; }
.pen svg { width: 12px; height: 16px; }
.flip { transform: rotate(180deg); transform-origin: center; transform-box: fill-box; }

.body { flex: 1; min-height: 0; display: flex; }
.tools { width: 28px; flex: none; box-sizing: border-box; border-right: 1px solid #aca899; display: flex; flex-direction: column; align-items: flex-start; }
.tools-grip { height: 4px; width: 27px; margin: 30px 0 3px; border-top: 1px solid #aca899; border-bottom: 1px solid #aca899; box-sizing: border-box; }
.tool { width: 23px; height: 22px; flex: none; margin-left: 2px; display: flex; align-items: center; justify-content: center; position: relative; box-sizing: border-box; }
.tool svg { width: 19px; height: 19px; }
.tool::after { content: ""; position: absolute; right: 0; bottom: 1px; border: 2px solid transparent; border-right-color: #000; border-bottom-color: #000; }
.tool.noflag::after { display: none; }
.tool.active { background: #fff; border: 1px solid #8eb2d6; border-radius: 3px; }
.tool.active svg { width: 17px; height: 17px; }
.hsep { width: 24px; height: 2px; margin: 1px 1px; background: #fff; border-top: 1px solid #c5c2b3; box-sizing: border-box; }

.work { width: 1040px; flex: none; display: grid; grid-template-columns: 18px 1006px 16px; grid-template-rows: 18px 767px 18px; }
.corner { grid-area: 1 / 1; }
.corner svg { width: 18px; height: 18px; }
.hruler { grid-area: 1 / 2 / 2 / 4; width: 1022px; height: 18px; }
.vruler { grid-area: 2 / 1 / 4 / 2; width: 18px; height: 785px; }
.canvas { grid-area: 2 / 2; width: 1006px; height: 767px; }
.rt { font: 10px "Liberation Sans", Arial, sans-serif; fill: #000; }
.ru { font-size: 9px; }
.vscroll { grid-area: 2 / 3; display: flex; flex-direction: column; align-items: center; justify-content: space-between; background: linear-gradient(90deg, #f1f0e8, #fff); padding: 5px 0 1px; box-sizing: border-box; position: relative; }
.sbtn { width: 14px; height: 14px; flex: none; box-sizing: border-box; border: 1px solid #fff; border-radius: 2px; background: linear-gradient(135deg, #e1ebff, #aac4f5); display: flex; align-items: center; justify-content: center; box-shadow: 0 0 0 .5px #c9d6ec; }
.sbtn svg { width: 9px; height: 7px; }
.thumb { flex: none; box-sizing: border-box; border: 1px solid #fff; border-radius: 2px; background: linear-gradient(135deg, #d6e2fd, #b8cdf7); display: flex; align-items: center; justify-content: center; box-shadow: 0 0 0 .5px #c9d6ec; }
.thumb i { background: repeating-linear-gradient(90deg, #fff 0 1px, #8ea8d8 1px 2px); width: 8px; height: 7px; }
.vthumb { width: 14px; height: 14px; }
.vthumb i { background: repeating-linear-gradient(0deg, #fff 0 1px, #8ea8d8 1px 2px); height: 8px; }
.bottom { grid-area: 3 / 2; display: flex; }
.pagenav { width: 505px; flex: none; position: relative; display: flex; align-items: center; height: 18px; border-top: 1px solid #000; box-sizing: border-box; }
.pn { flex: none; }
.pn1 { width: 8px; height: 10px; margin-left: 5px; }
.pn2 { width: 9px; height: 9px; margin-left: 8px; }
.pgnum { width: 30px; margin-left: 21px; font-size: 11px; padding-top: 3px; white-space: nowrap; }
.pn3 { width: 9px; height: 9px; margin-left: 20px; }
.pn4 { width: 8px; height: 10px; margin-left: 7px; transform: scaleX(-1); }
.pgtab { position: absolute; left: 132px; top: -1px; width: 94px; height: 18px; display: flex; justify-content: center; }
.tabshape { position: absolute; left: 0; top: 0; width: 96px; height: 18px; }
.pgtab b { position: relative; font-size: 12px; margin-left: 1px; }
.hscroll { flex: 1; height: 16px; display: flex; align-items: center; background: linear-gradient(180deg, #f1f0e8, #fff 40%, #f4f3ee); position: relative; padding-left: 3px; }
.hscroll .sbtn { height: 15px; width: 14px; }
.hscroll .lft svg { transform: rotate(-90deg); }
.hscroll .rgt { position: absolute; right: 2px; }
.hscroll .rgt svg { transform: rotate(90deg); }
.hthumb { position: absolute; left: 254px; width: 16px; height: 14px; }
.sq { grid-area: 3 / 3; display: flex; align-items: center; justify-content: center; }
.sq i { width: 10px; height: 10px; background: #fff; border: 1px solid #aca899; }

.dock { width: 190px; flex: none; box-sizing: border-box; display: flex; flex-direction: column; padding-left: 6px; border-right: 1px solid #d5d2c3; border-top: 1px solid #fff; }
.dtitle { display: flex; align-items: center; font-size: 11px; width: 180px; box-sizing: border-box; padding-right: 5px; flex: none; }
.t1 { height: 20px; padding: 0 5px 3px 4px; }
.t2 { height: 22px; padding-left: 19px; border-top: 1px solid #fff; margin-top: 5px; }
.dbl { width: 9px; height: 7px; margin-right: 5px; flex: none; }
.rule { flex: 1; height: 3px; margin: 0 6px 0 1px; border-top: 1px solid #aca899; border-bottom: 1px solid #aca899; }
.dx { width: 9px; height: 9px; }
.panel { width: 179px; box-sizing: border-box; border: 1px solid #b7b9ad; background: linear-gradient(180deg, #fff, #f2f1ea); box-shadow: inset 0 0 0 1px #fff; }
.p1 { height: 382px; padding: 12px 0 0 9px; flex: none; }
.p2 { flex: 1; margin-bottom: 3px; padding: 8px 0 0; }
.tabs { display: flex; height: 24px; align-items: flex-end; gap: 1px; }
.tab { width: 20px; height: 22px; box-sizing: border-box; border: 1px solid #a9c0d5; border-bottom: 0; border-radius: 4px 4px 0 0; background: linear-gradient(#fff, #ece9d8); display: flex; align-items: center; justify-content: center; }
.tab svg { width: 15px; height: 15px; }
.tab.on { width: 24px; height: 25px; border-top: 3px solid #f0a72c; background: #fff; position: relative; top: 1px; z-index: 1; }
.tab.on svg { width: 19px; height: 19px; }
.tabbody { width: 160px; height: 307px; box-sizing: border-box; border: 1px solid #9eb4c4; background: linear-gradient(180deg, #fff, #f7f6f1); padding: 9px 0 0 9px; }
.fillrow { display: flex; gap: 4px; }
.fb { width: 20px; height: 20px; box-sizing: border-box; border: 2px solid #1f5077; border-radius: 3px; display: flex; align-items: center; justify-content: center; background: #f3f3ee; overflow: hidden; }
.fb svg { width: 13px; height: 13px; }
.fb i { width: 16px; height: 16px; }
.wheel { background: conic-gradient(#f00, #f0f, #00f, #0ff, #0f0, #ff0, #f00); }
.f-grad { background: linear-gradient(135deg, #222, #eee); }
.f-pat { background: conic-gradient(#111 25%, #e4e4f4 0 50%, #111 0 75%, #e4e4f4 0) 0 0 / 11px 11px; }
.f-tex { background: repeating-linear-gradient(45deg, #8888aa 0 3px, #ddddee 3px 5px, #445 5px 6px); }
.f-ps { background: repeating-linear-gradient(0deg, #222 0 1px, #dde 1px 2px) 0 0 / 100% 8px no-repeat #eef; font: 700 7px/7px "Liberation Sans", sans-serif; padding-top: 9px; box-sizing: border-box; text-align: right; }
.group { margin: 8px 0 0 -2px; padding: 0; width: 141px; height: 170px; box-sizing: border-box; border: 1px solid #d4d0c8; border-radius: 4px; }
.group legend { color: #0046d5; margin-left: 8px; padding: 0 1px; line-height: 13px; }
.newrow { display: flex; align-items: center; justify-content: space-between; height: 46px; padding: 0 8px 0 8px; margin-top: 4px; }
.newlbl { padding-top: 3px; }
.newcol { width: 56px; height: 46px; background: #fb9c96; }
.gridwrap { display: flex; margin: 15px 0 0 10px; gap: 1px; }
.cgrid { display: grid; grid-template-columns: repeat(6, 16px); grid-auto-rows: 16px; gap: 1px; padding: 1px; background: #000; width: 103px; box-sizing: border-box; }
.cgrid .sel { box-shadow: 0 0 0 1.500px #c8dcea; z-index: 1; }
.gscroll { width: 16px; height: 85px; display: flex; flex-direction: column; align-items: center; background: linear-gradient(90deg, #f3f2ea, #fff); position: relative; }
.gscroll .sbtn { width: 14px; height: 15px; }
.gscroll .sbtn:last-child { margin-top: auto; }
.gthumb { width: 14px; height: 14px; margin-top: 1px; }
.fmt { width: 73px; height: 21px; box-sizing: border-box; margin: 28px 0 0 66px; border: 2px solid #1f5077; border-radius: 3px; display: flex; align-items: center; justify-content: center; overflow: hidden; white-space: nowrap; background: linear-gradient(#fff, #eeede4); }
.fmt span { margin-right: 9px; flex: none; letter-spacing: .3px; }
.pbtns { display: flex; margin: 7px 0 0 44px; gap: 8px; }
.lk { width: 35px; height: 21px; box-sizing: border-box; border: 2px solid #1f5077; border-radius: 3px; display: flex; align-items: center; justify-content: center; background: linear-gradient(#fff, #e6e4d8); }
.lk svg { width: 14px; height: 14px; }
.apply { width: 73px; height: 21px; box-sizing: border-box; border: 1px solid #cfcdbf; border-radius: 3px; color: #aca899; display: flex; align-items: center; justify-content: center; }
.shapec { width: 150px; height: 21px; margin: 1px 0 0 8px; font-size: 11px; }
.shapec .combo-btn { height: 17px; }
.divider { height: 1px; background: #b7b5a6; margin: 6px 0 0 6px; }
.lbl1 { margin: 8px 0 0 11px; font-size: 11px; line-height: 14px; }
.preview { width: 133px; height: 64px; margin: 4px 0 0 27px; box-sizing: border-box; border: 2px solid; border-color: #7f7a66 #f1efe2 #f1efe2 #7f7a66; background: #fff; }
.preview svg { width: 129px; height: 60px; }
.lbl2 { margin: 7px 0 0 27px; line-height: 14px; font-size: 11px; }
.chk { display: flex; align-items: center; gap: 3px; height: 14px; margin: 7px 0 0 26px; font-size: 11px; }
.chk + .chk { margin-top: 5px; }
.cb { width: 13px; height: 13px; box-sizing: border-box; border: 1px solid #1c5180; background: linear-gradient(135deg, #dcdcd7, #fff); }
.actbtn { width: 133px; height: 21px; box-sizing: border-box; margin: 7px 0 0 27px; border: 1px solid #1f5077; border-radius: 3px; display: flex; align-items: center; justify-content: center; background: linear-gradient(#fff, #ecebe5); box-shadow: inset 0 -2px #d6d0c5; }

.palette { width: 22px; flex: none; display: flex; flex-direction: column; align-items: center; }
.pal-top { width: 16px; height: 16px; margin-top: 7px; }
.pal-top svg { width: 16px; height: 16px; }
.pal-up { margin-top: 2px; width: 16px; height: 15px; opacity: .45; background: #f1efe2; }
.swatches { width: 18px; display: grid; grid-auto-rows: 16px; gap: 1px; background: #000; padding: 0 1px; box-sizing: border-box; height: 714px; border: 1px solid #000; border-width: 0 0 1px; }
.swatches i { width: 16px; }
.swatches .none { background: #fff; }
.swatches .none svg { width: 16px; height: 16px; }
.swatches .cur { box-shadow: inset 0 0 0 2px #cfe0ee; outline: 1px solid #5f7f9f; }
.pal-down { margin-top: 2px; width: 16px; height: 15px; }
.pal-nav { width: 8px; height: 10px; margin-top: 4px; }

.status { height: 45px; flex: none; display: flex; border-top: 1px solid #fff; box-sizing: border-box; }
.st-main { width: 1068px; padding: 5px 0 0 4px; box-sizing: border-box; white-space: pre; }
.st1, .st2 { height: 20px; display: flex; line-height: 14px; }
.w400 { width: 400px; letter-spacing: .05px; }
.w115 { width: 115px; }
.st-right { flex: 1; display: flex; flex-direction: column; padding: 4px 11px 0 3px; gap: 4px; }
.st-row { height: 16px; display: flex; align-items: center; white-space: pre; }
.st-row svg { width: 16px; height: 16px; flex: none; margin-right: 5px; }
.st-sw { width: 30px; height: 16px; margin-left: auto; }
.pink { background: #fb9c96; }
.blk { background: #24201c; }

.taskbar { height: 30px; flex: none; display: flex; align-items: center; background: linear-gradient(180deg, #1f2f86 0, #3165c4 3%, #3682e5 6%, #4490e6 10%, #3883e5 12%, #2b71e0 15%, #2663da 20%, #235bd6 25%, #2258d5 85%, #1941a5 100%); color: #fff; }
.start { width: 95px; height: 30px; flex: none; display: flex; align-items: center; border-radius: 0 10px 10px 0; background: linear-gradient(180deg, #388e3c 0, #5cb85c 10%, #3f9a41 25%, #38903a 70%, #2f7d31 100%); box-shadow: inset -3px 0 4px #1d5c1f; box-sizing: border-box; padding-left: 9px; }
.start svg { width: 21px; height: 21px; margin-right: 4px; }
.start span { font-weight: 700; font-style: italic; font-size: 17px; text-shadow: 1px 1px 2px #1c3d1c; }
.task { width: 157px; height: 24px; box-sizing: border-box; flex: none; display: flex; align-items: center; margin-left: 3px; border-radius: 3px; background: linear-gradient(180deg, #4a8ff5, #3c81f3 30%, #3a7cee); padding-left: 11px; white-space: nowrap; overflow: hidden; }
.task:nth-child(2) { margin-left: 11px; }
.task svg { width: 16px; height: 16px; flex: none; margin-right: 1px; }
.task.cur { background: #1e52b7; box-shadow: inset 1px 1px 2px #123a8a; }
.lang { margin-left: auto; width: 16px; height: 16px; background: #3d6fc0; font-size: 11px; line-height: 16px; text-align: center; flex: none; }
.help { width: 18px; height: 18px; margin-left: 4px; flex: none; }
.qm { font: 700 10px "Liberation Sans", sans-serif; fill: #111; }
.dsk { width: 16px; height: 20px; margin-left: 6px; flex: none; }
.tray { height: 30px; width: 111px; margin-left: 13px; flex: none; box-sizing: border-box; display: flex; align-items: center; background: linear-gradient(180deg, #0c59b9 0, #139ee9 6%, #18b5f2 12%, #139beb 20%, #1290e8 30%, #0d8dea 85%, #0f73cf 100%); border-left: 1px solid #0f3e9e; position: relative; gap: 1px; }
.chev { width: 18px; height: 18px; box-sizing: border-box; border: 1px solid #fff; border-radius: 50%; background: #2b62d8; margin-left: -9px; display: flex; align-items: center; justify-content: center; flex: none; }
.chev svg { width: 10px; height: 10px; }
.ti { width: 18px; height: 18px; flex: none; }
.clock { margin-left: 5px; font-size: 11px; letter-spacing: .5px; }
</style>
<style>
html, body { margin: 0; padding: 0; background: #ece9d8; }
</style>
